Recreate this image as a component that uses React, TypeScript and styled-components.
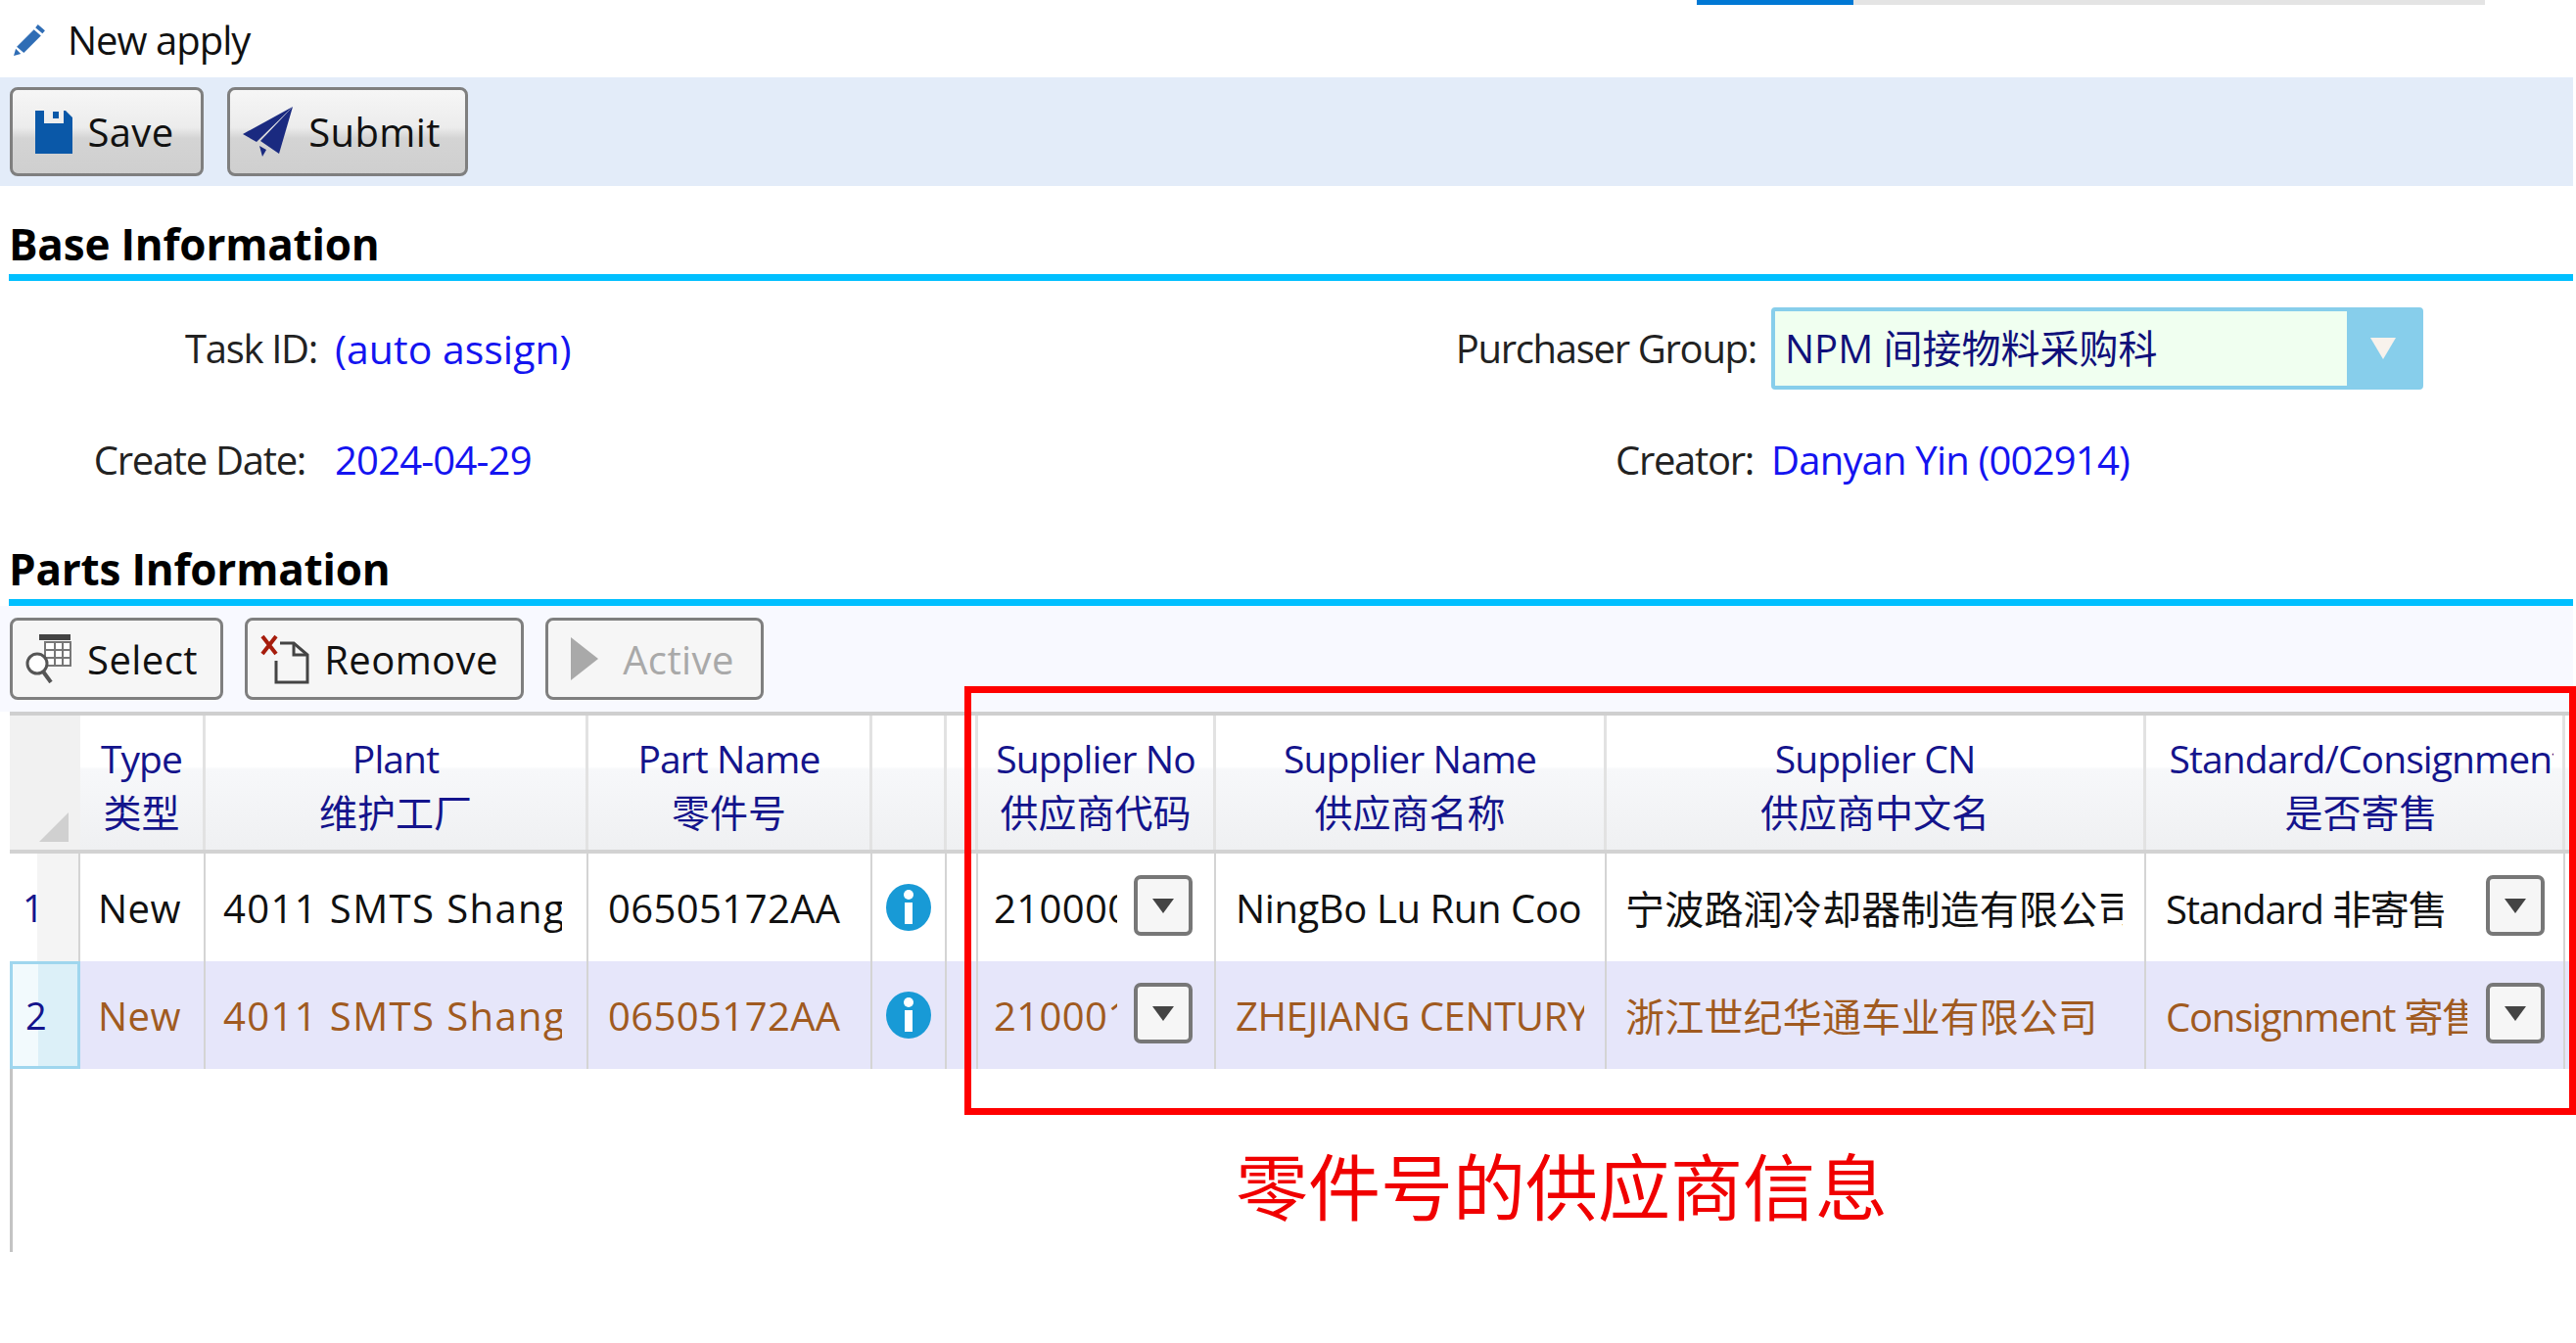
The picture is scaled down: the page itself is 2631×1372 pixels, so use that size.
import React from "react";
import styled, { createGlobalStyle } from "styled-components";

const FONT = `"Open Sans", "Noto Sans CJK SC", sans-serif`;

const GlobalStyle = createGlobalStyle`
  html, body {
    margin: 0;
    padding: 0;
    background: #fff;
    font-family: ${FONT};
    color: #111;
  }
`;

const COLUMNS = "72px 128px 391px 290px 76px 32px 243px 399px 551px 428px 8px";

const Page = styled.div`
  position: relative;
  width: 2631px;
  height: 1372px;
  overflow: hidden;
  padding-right: 3px;
  box-sizing: border-box;
`;

const Progress = styled.div`
  display: flex;
  height: 5px;
  margin-left: 1733px;
  width: 805px;
  background: #e4e4e4;
`;

const ProgressFill = styled.div`
  width: 160px;
  background: #0078d4;
`;

const PageTitle = styled.div`
  display: flex;
  align-items: center;
  gap: 21px;
  box-sizing: border-box;
  height: 74px;
  padding: 0 0 3px 13px;
  font-size: 40px;
  letter-spacing: -1px;
  svg {
    width: 35px;
    height: 35px;
  }
`;

const ActionBar = styled.div<{ $light?: boolean }>`
  display: flex;
  gap: ${(p) => (p.$light ? "22px" : "24px")};
  align-items: flex-start;
  box-sizing: border-box;
  height: ${(p) => (p.$light ? "108px" : "111px")};
  padding: ${(p) => (p.$light ? "12px 0 0 10px" : "10px 0 0 10px")};
  background: ${(p) => (p.$light ? "#f8f9ff" : "#e3ecf9")};
`;

const ActionButton = styled.div<{
  $w: number;
  $h: number;
  $shift: number;
  $flat?: boolean;
  $disabled?: boolean;
}>`
  display: flex;
  align-items: center;
  justify-content: center;
  gap: ${(p) => (p.$disabled ? "25px" : "15px")};
  box-sizing: border-box;
  width: ${(p) => p.$w}px;
  height: ${(p) => p.$h}px;
  padding-right: ${(p) => p.$shift}px;
  border: 3px solid #7f7f7f;
  border-radius: 8px;
  font-size: 40px;
  letter-spacing: 0.4px;
  color: ${(p) => (p.$disabled ? "#a9a9a9" : "#111")};
  background: ${(p) =>
    p.$flat
      ? "#f6f6f6"
      : "linear-gradient(#f6f6f6 0%, #ececec 45%, #d4d4d4 58%, #cfcfcf 100%)"};
`;

const SectionHeading = styled.div<{ $h: number; $pad: number }>`
  display: flex;
  align-items: center;
  box-sizing: border-box;
  height: ${(p) => p.$h}px;
  padding-top: ${(p) => p.$pad}px;
  margin-left: 9px;
  border-bottom: 7px solid #00bfff;
  font-size: 44px;
  font-weight: 700;
  letter-spacing: -0.2px;
  color: #000;
`;

const FormGrid = styled.div`
  display: grid;
  grid-template-columns: 324px 18px 1148px 304px 15px 1fr;
  grid-template-rows: 111px 116px;
  height: 242px;
  align-items: center;
  font-size: 40px;
  letter-spacing: -1.3px;
  padding-top: 13px;
  box-sizing: border-box;
`;

const Label = styled.div<{ $col: number; $inset?: number }>`
  grid-column: ${(p) => p.$col};
  justify-self: end;
  margin-right: ${(p) => p.$inset ?? 0}px;
  white-space: nowrap;
  color: #222;
`;

const Value = styled.div<{ $col: number; $big?: boolean }>`
  grid-column: ${(p) => p.$col};
  color: #1414f0;
  white-space: nowrap;
  font-size: ${(p) => (p.$big ? "41px" : "40px")};
  letter-spacing: ${(p) => (p.$big ? "0" : "-0.8px")};
`;

const Select = styled.div`
  grid-column: 6;
  display: flex;
  box-sizing: border-box;
  width: 666px;
  height: 84px;
  border: 4px solid #87ceeb;
  border-radius: 4px;
  background: #f0fff0;
`;

const SelectText = styled.div`
  flex: 1;
  display: flex;
  align-items: center;
  padding: 0 0 3px 10px;
  color: #10107a;
  letter-spacing: 0;
`;

const SelectArrow = styled.div`
  width: 74px;
  display: flex;
  align-items: center;
  justify-content: center;
  background: #87ceeb;
  &::after {
    content: "";
    border-left: 13px solid transparent;
    border-right: 13px solid transparent;
    border-top: 22px solid #f8f2ec;
  }
`;

const Grid = styled.div`
  margin-left: 10px;
  border-top: 4px solid #cfcfcf;
`;

const Row = styled.div<{ $selected?: boolean }>`
  display: grid;
  grid-template-columns: ${COLUMNS};
  height: 110px;
  background: ${(p) => (p.$selected ? "#e6e6fa" : "#fff")};
  color: ${(p) => (p.$selected ? "#a05a20" : "#111")};
  font-size: 40px;
  letter-spacing: 0.4px;
`;

const HeaderRow = styled(Row)`
  height: 141px;
  color: #14148c;
  font-size: 39px;
  letter-spacing: 0;
  background: linear-gradient(#fff 0%, #fff 38%, #f7f8fa 40%, #eff0f2 100%);
  border-bottom: 4px solid #d2d2d2;
  box-sizing: border-box;
`;

const HeaderCell = styled.div<{ $pad?: number }>`
  display: flex;
  flex-direction: column;
  align-items: safe center;
  justify-content: center;
  box-sizing: border-box;
  line-height: 55px;
  padding-top: 5px;
  padding-left: ${(p) => p.$pad ?? 0}px;
  overflow: hidden;
  white-space: nowrap;
  border-right: 3px solid #e2e2e2;
`;

const HeaderEn = styled.span<{ $clip?: number }>`
  letter-spacing: -0.9px;
  ${(p) => (p.$clip ? `max-width: ${p.$clip}px; overflow: hidden;` : "")}
`;

const Corner = styled(HeaderCell)`
  position: relative;
  background: #f1f1f1;
  border-right: none;
  &::after {
    content: "";
    position: absolute;
    right: 12px;
    bottom: 8px;
    border-left: 30px solid transparent;
    border-bottom: 30px solid #d0d0d0;
  }
`;

const Cell = styled.div<{ $pad?: number }>`
  display: flex;
  align-items: center;
  box-sizing: border-box;
  padding-left: ${(p) => p.$pad ?? 18}px;
  overflow: hidden;
  white-space: nowrap;
  border-right: 2px solid #d4d4d4;
`;

const ClipText = styled.span<{ $w: number; $track?: number }>`
  display: block;
  flex: none;
  width: ${(p) => p.$w}px;
  overflow: hidden;
  letter-spacing: ${(p) => p.$track ?? 0.4}px;
`;

const RowHead = styled.div<{ $selected?: boolean }>`
  display: flex;
  align-items: center;
  box-sizing: border-box;
  padding-left: 13px;
  color: #14148c;
  font-size: 38px;
  border-right: 2px solid #d4d4d4;
  background: ${(p) =>
    p.$selected
      ? "linear-gradient(90deg, #f2fafd 0 40%, #dcf0f8 40% 100%)"
      : "linear-gradient(90deg, #fff 0 40%, #f4f4f4 40% 100%)"};
  ${(p) => (p.$selected ? "border: 3px solid #9fd6ee;" : "")}
`;

const DropButton = styled.div<{ $gap: number }>`
  flex: none;
  display: flex;
  align-items: center;
  justify-content: center;
  box-sizing: border-box;
  width: 60px;
  height: 62px;
  margin: -4px ${(p) => p.$gap}px 0 auto;
  border: 4px solid #777;
  border-radius: 7px;
  background: #f6f6f6;
  &::after {
    content: "";
    border-left: 11px solid transparent;
    border-right: 11px solid transparent;
    border-top: 15px solid #444;
  }
`;

const BlankArea = styled.div`
  height: 187px;
  margin-left: 10px;
  border-left: 3px solid #c4c4c4;
  padding: 80px 0 0 1249px;
  box-sizing: border-box;
`;

const Annotation = styled.div`
  font-size: 74px;
  line-height: 1;
  color: #f00000;
  font-family: "Noto Sans CJK SC", sans-serif;
  white-space: nowrap;
`;

const RedFrame = styled.div`
  position: absolute;
  left: 985px;
  top: 701px;
  width: 1646px;
  height: 438px;
  box-sizing: border-box;
  border: 7px solid #f00;
`;

const PencilIcon = () => (
  <svg viewBox="0 0 34 34">
    <path d="M25 2l7 6-2.5 3-7-6z" fill="#2f6db5" />
    <path d="M21 7l7 6L11 30l-7-6z" fill="#2f6db5" />
    <path d="M3 26l5 5-7 2z" fill="#2f6db5" />
  </svg>
);

const SaveIcon = () => (
  <svg width="38" height="44" viewBox="0 0 38 44">
    <path d="M0 0h9v13h20V0h2l7 7v37H0z" fill="#0a58a8" />
    <path d="M18 1h6v7h-6z" fill="#0a58a8" />
  </svg>
);

const PlaneIcon = () => (
  <svg width="52" height="52" viewBox="0 0 52 52">
    <path d="M51 0L0 28l14 8z" fill="#1a2a80" />
    <path d="M51 0L18 35l19 13z" fill="#1a2a80" />
    <path d="M17 40l3 11 4-7z" fill="#1a2a80" />
  </svg>
);

const SelectIcon = () => (
  <svg width="48" height="50" viewBox="0 0 48 50">
    <path d="M14 0h32v6H14z" fill="#444" />
    <path d="M20 8h26v24H20z" fill="#fff" stroke="#777" strokeWidth="2" />
    <path d="M30 8v24M38 8v24M20 16h26M20 24h26" stroke="#777" strokeWidth="2" />
    <circle cx="12" cy="30" r="10" fill="#fff" stroke="#555" strokeWidth="3" />
    <path d="M18 38l8 11" stroke="#555" strokeWidth="4" />
  </svg>
);

const RemoveIcon = () => (
  <svg width="50" height="52" viewBox="0 0 50 52">
    <path d="M2 3l14 18M16 3L2 21" stroke="#a61c0c" strokeWidth="4" />
    <path d="M20 10h14l14 12v28H16V28" fill="none" stroke="#444" strokeWidth="3" />
    <path d="M34 10v12h14" fill="none" stroke="#444" strokeWidth="3" />
  </svg>
);

const PlayIcon = () => (
  <svg width="28" height="44" viewBox="0 0 28 44">
    <path d="M0 0l28 22L0 44z" fill="#a9a9a9" />
  </svg>
);

const InfoIcon = () => (
  <svg width="50" height="50" viewBox="0 0 48 50">
    <ellipse cx="24" cy="25" rx="23" ry="24" fill="#189ad6" />
    <circle cx="24" cy="12" r="5" fill="#fff" />
    <path d="M20 20h8v22h-8z" fill="#fff" />
  </svg>
);

const HEADERS = [
  ["Type", "类型"],
  ["Plant", "维护工厂"],
  ["Part Name", "零件号"],
  ["", ""],
  ["", ""],
  ["Supplier No", "供应商代码"],
  ["Supplier Name", "供应商名称"],
  ["Supplier CN", "供应商中文名"],
  ["Standard/Consignment", "是否寄售"],
];

const ROWS = [
  {
    no: "1",
    type: "New",
    plant: "4011 SMTS Shanghai",
    part: "06505172AA",
    code: "210000",
    name: "NingBo Lu Run Cooler Co., Ltd",
    cn: "宁波路润冷却器制造有限公司",
    consign: "Standard 非寄售",
  },
  {
    no: "2",
    type: "New",
    plant: "4011 SMTS Shanghai",
    part: "06505172AA",
    code: "210001",
    name: "ZHEJIANG CENTURY HUATONG",
    cn: "浙江世纪华通车业有限公司",
    consign: "Consignment 寄售",
  },
];

const App: React.FC = () => {
  return (
    <Page>
      <GlobalStyle />
      <Progress>
        <ProgressFill />
      </Progress>
      <PageTitle>
        <PencilIcon />
        New apply
      </PageTitle>
      <ActionBar>
        <ActionButton $w={198} $h={91} $shift={4}>
          <SaveIcon />
          Save
        </ActionButton>
        <ActionButton $w={246} $h={91} $shift={12}>
          <PlaneIcon />
          Submit
        </ActionButton>
      </ActionBar>
      <SectionHeading $h={97} $pad={28}>
        Base Information
      </SectionHeading>
      <FormGrid>
        <Label $col={1}>Task ID:</Label>
        <Value $col={3} $big>
          (auto assign)
        </Value>
        <Label $col={4}>Purchaser Group:</Label>
        <Select>
          <SelectText>NPM 间接物料采购科</SelectText>
          <SelectArrow />
        </Select>
        <Label $col={1} $inset={12}>
          Create Date:
        </Label>
        <Value $col={3}>2024-04-29</Value>
        <Label $col={4} $inset={3}>
          Creator:
        </Label>
        <Value $col={6}>Danyan Yin (002914)</Value>
      </FormGrid>
      <SectionHeading $h={90} $pad={20}>
        Parts Information
      </SectionHeading>
      <ActionBar $light>
        <ActionButton $w={218} $h={84} $shift={10} $flat>
          <SelectIcon />
          Select
        </ActionButton>
        <ActionButton $w={285} $h={84} $shift={10} $flat>
          <RemoveIcon />
          Reomove
        </ActionButton>
        <ActionButton $w={223} $h={84} $shift={4} $flat $disabled>
          <PlayIcon />
          Active
        </ActionButton>
      </ActionBar>
      <Grid>
        <HeaderRow>
          <Corner />
          {HEADERS.map(([en, cn], i) => {
            const isLast = i === HEADERS.length - 1;
            return (
              <HeaderCell key={i} $pad={isLast ? 14 : 0}>
                <HeaderEn $clip={isLast ? 392 : undefined}>{en}</HeaderEn>
                <span>{cn}</span>
              </HeaderCell>
            );
          })}
          <HeaderCell />
        </HeaderRow>
        {ROWS.map((row, i) => (
          <Row key={row.no} $selected={i === 1}>
            <RowHead $selected={i === 1}>{row.no}</RowHead>
            <Cell>{row.type}</Cell>
            <Cell>
              <ClipText $w={346} $track={1.4}>
                {row.plant}
              </ClipText>
            </Cell>
            <Cell $pad={20}>{row.part}</Cell>
            <Cell $pad={12}>
              <InfoIcon />
            </Cell>
            <Cell />
            <Cell $pad={16}>
              <ClipText $w={126}>{row.code}</ClipText>
              <DropButton $gap={22} />
            </Cell>
            <Cell $pad={20}>
              <ClipText $w={356} $track={-0.4}>
                {row.name}
              </ClipText>
            </Cell>
            <Cell $pad={19}>
              <ClipText $w={508} $track={0.2}>
                {row.cn}
              </ClipText>
            </Cell>
            <Cell $pad={20}>
              <ClipText $w={308} $track={-1.2}>
                {row.consign}
              </ClipText>
              <DropButton $gap={19} />
            </Cell>
            <div />
          </Row>
        ))}
      </Grid>
      <BlankArea>
        <Annotation>零件号的供应商信息</Annotation>
      </BlankArea>
      <RedFrame />
    </Page>
  );
};

export default App;
